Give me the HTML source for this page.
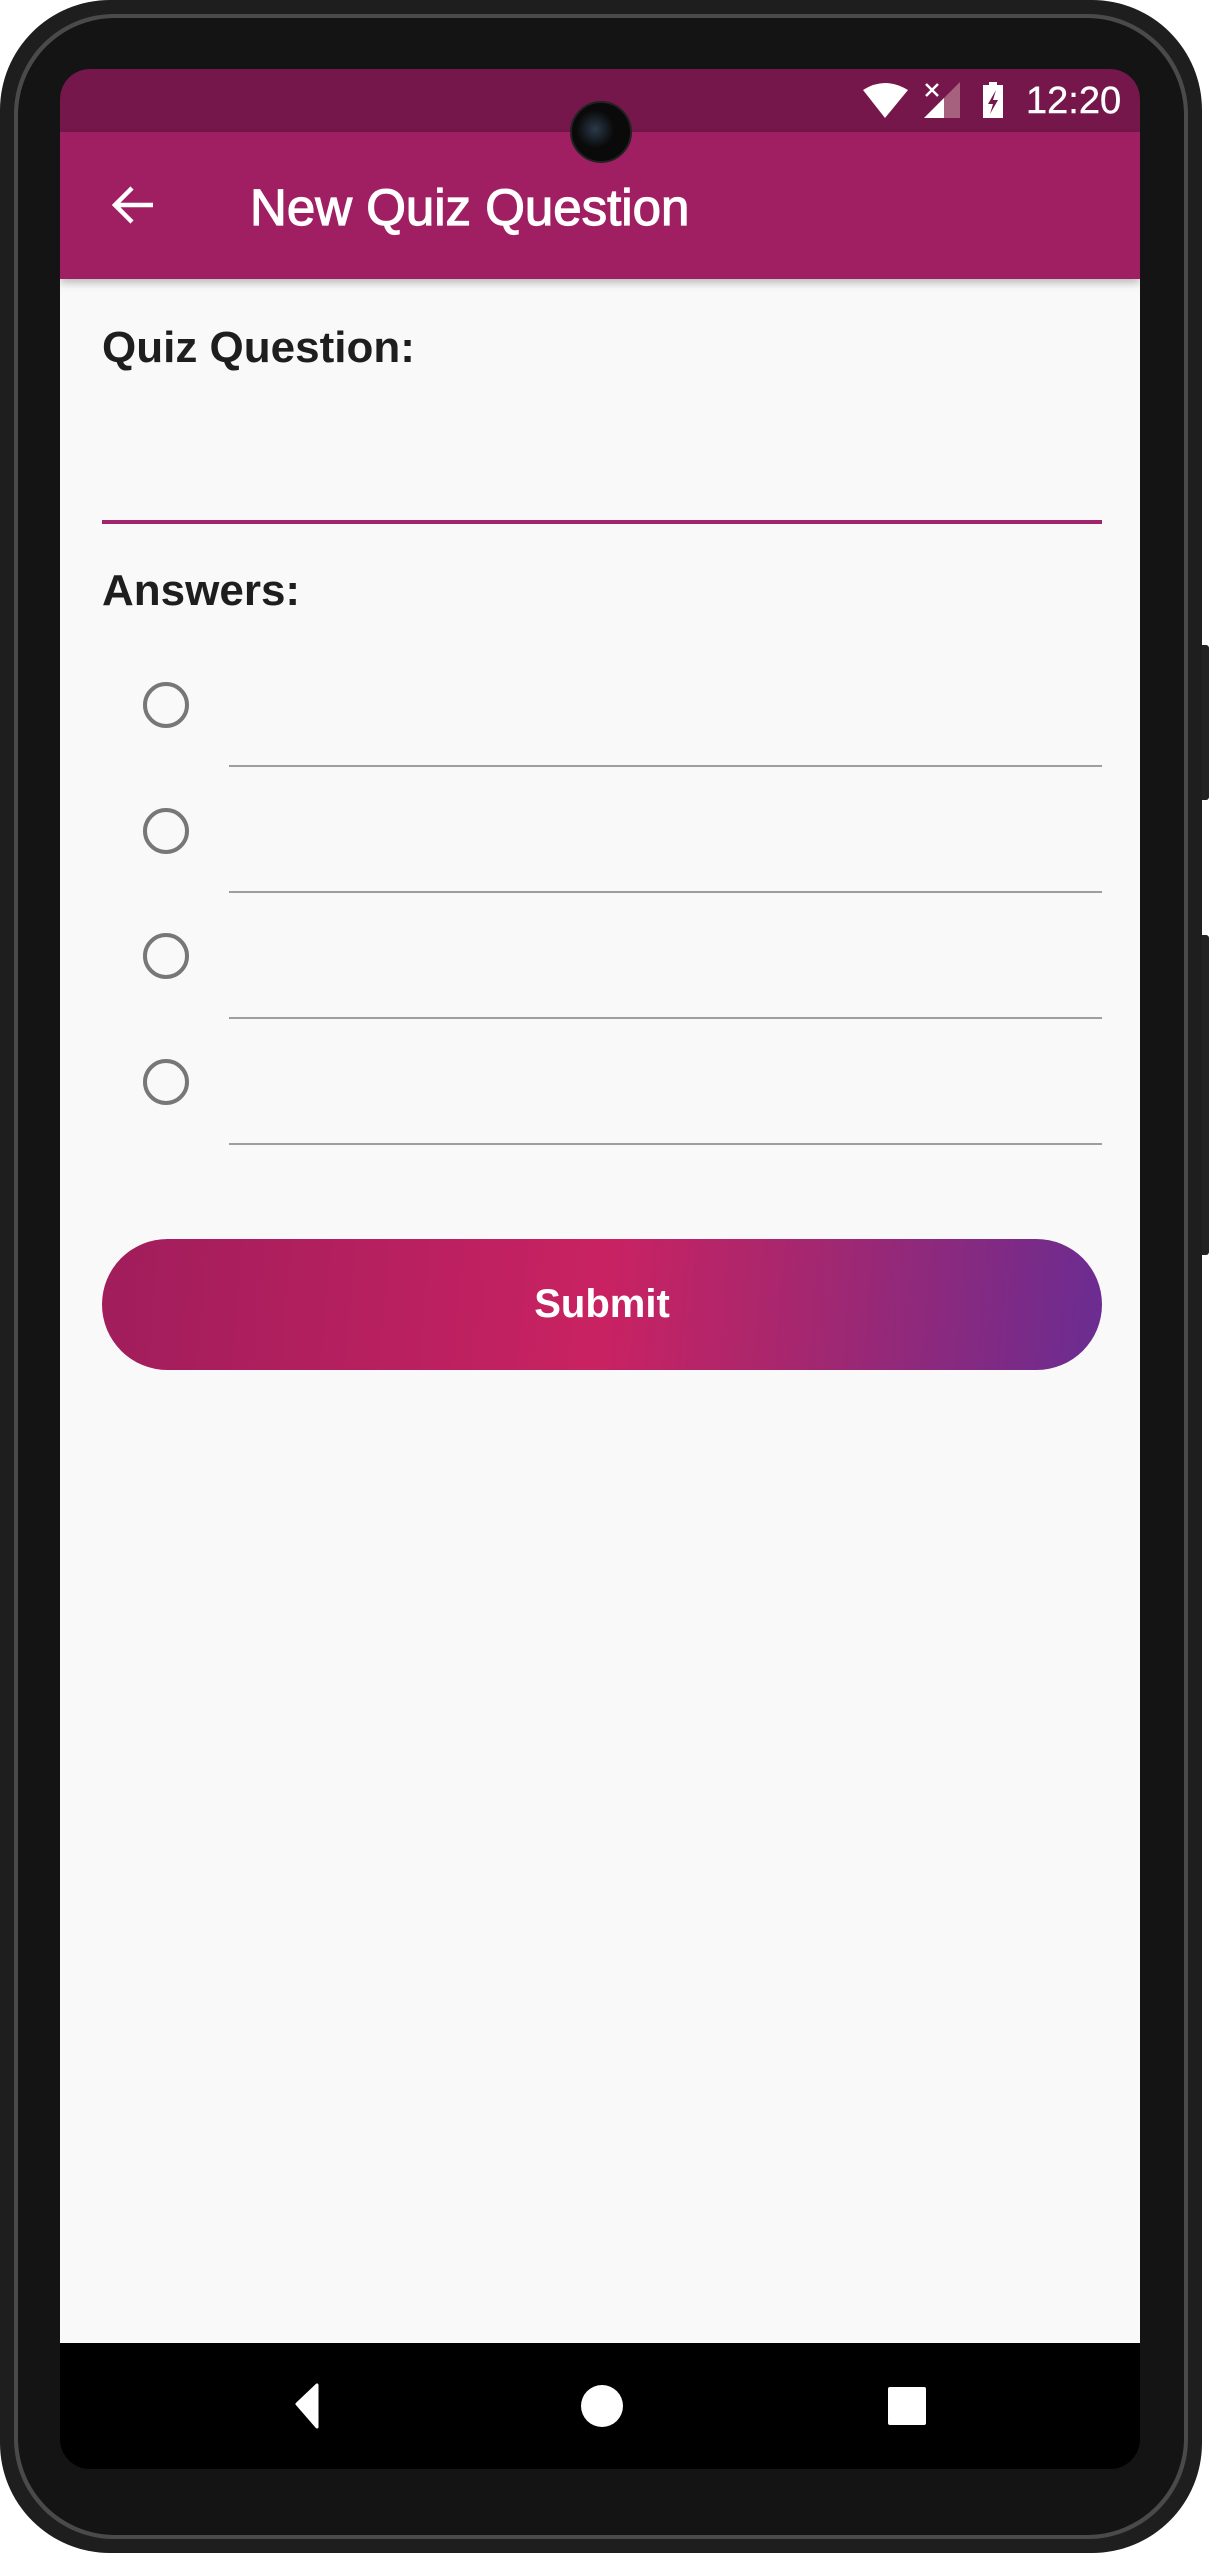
<!DOCTYPE html>
<html><head><style>
*{margin:0;padding:0;box-sizing:border-box}
body{width:1209px;height:2553px;background:#fff;position:relative;overflow:hidden;font-family:"Liberation Sans",sans-serif}
.abs{position:absolute}
</style></head><body>
<div class="abs" style="left:1199px;top:645px;width:10px;height:155px;background:#222;border-radius:3px"></div>
<div class="abs" style="left:1199px;top:935px;width:10px;height:320px;background:#222;border-radius:3px"></div>
<div class="abs" style="left:0;top:0;width:1202px;height:2553px;background:#1e1e1e;border-radius:110px"></div>
<div class="abs" style="left:14px;top:14px;width:1174px;height:2525px;background:#4a4a4a;border-radius:100px"></div>
<div class="abs" style="left:18px;top:18px;width:1166px;height:2517px;background:#141414;border-radius:97px"></div>
<div class="abs" style="left:60px;top:69px;width:1080px;height:2400px;background:#000;border-radius:30px;overflow:hidden">
  <div class="abs" style="left:0;top:0;width:1080px;height:63px;background:#75174a"></div>
  <div class="abs" style="left:0;top:63px;width:1080px;height:147px;background:#a01f62;box-shadow:0 4px 8px rgba(0,0,0,0.25);z-index:2"></div>
  <div class="abs" style="left:0;top:210px;width:1080px;height:2064px;background:#f9f9f9"></div>
</div>
<svg class="abs" style="left:860px;top:80px" width="160" height="42" viewBox="0 0 160 42">
  <path d="M3 10 Q25 -4 48 10 L25 38 Z" fill="#fff"/>
  <path d="M64 38 L100 2 L100 38 Z" fill="#a6617f"/>
  <path d="M64 38 L84 18 L84 38 Z" fill="#fff"/>
  <path d="M66 4 L78 16 M78 4 L66 16" stroke="#fff" stroke-width="2.5"/>
  <rect x="123" y="5" width="20" height="33" fill="#fff"/><rect x="129" y="2" width="8" height="4" fill="#fff"/>
  <path d="M136 10 L128 24 L133 24 L130 34 L138 20 L133 20 Z" fill="#75174a"/>
</svg>
<div class="abs" style="left:1026px;top:79px;color:#fff;font-size:38px;line-height:44px;-webkit-text-stroke:0.4px #fff">12:20</div>
<div class="abs" style="left:570px;top:101px;width:62px;height:62px;border-radius:50%;background:radial-gradient(circle at 40% 45%,#2a3a4a 0,#0a0a0a 40%);border:2px solid #222;z-index:5"></div>
<svg class="abs" style="left:108px;top:182px;z-index:3" width="50" height="50" viewBox="0 0 50 50">
  <path d="M45 23 H8 M24 6 L7 23 L24 40" stroke="#fff" stroke-width="4.5" fill="none"/>
</svg>
<div class="abs" style="left:250px;top:178px;color:#fff;font-size:51px;line-height:60px;z-index:3;-webkit-text-stroke:1.2px #fff">New Quiz Question</div>
<div class="abs" style="left:102px;top:320px;color:#1e1e1e;font-size:44px;font-weight:bold;line-height:56px">Quiz Question:</div>
<div class="abs" style="left:102px;top:520px;width:1000px;height:4px;background:#a3246a"></div>
<div class="abs" style="left:102px;top:563px;color:#1e1e1e;font-size:44px;font-weight:bold;line-height:56px">Answers:</div>
<div class="abs" style="left:143px;top:682px;width:46px;height:46px;border-radius:50%;border:4px solid #777"></div>
<div class="abs" style="left:143px;top:808px;width:46px;height:46px;border-radius:50%;border:4px solid #777"></div>
<div class="abs" style="left:143px;top:933px;width:46px;height:46px;border-radius:50%;border:4px solid #777"></div>
<div class="abs" style="left:143px;top:1059px;width:46px;height:46px;border-radius:50%;border:4px solid #777"></div>
<div class="abs" style="left:229px;top:765px;width:873px;height:2px;background:#9e9e9e"></div>
<div class="abs" style="left:229px;top:891px;width:873px;height:2px;background:#9e9e9e"></div>
<div class="abs" style="left:229px;top:1017px;width:873px;height:2px;background:#9e9e9e"></div>
<div class="abs" style="left:229px;top:1143px;width:873px;height:2px;background:#9e9e9e"></div>
<div class="abs" style="left:102px;top:1239px;width:1000px;height:131px;border-radius:66px;background:linear-gradient(95deg,#a01d5c 0%,#c92262 50%,#a5276f 70%,#6a2c91 100%);color:#fff;font-size:40px;font-weight:bold;text-align:center;line-height:131px">Submit</div>
<svg class="abs" style="left:270px;top:2380px" width="680" height="52" viewBox="0 0 680 52">
  <path d="M47 5 L47 47 L27 24 Z" fill="#fff" stroke="#fff" stroke-width="3" stroke-linejoin="round"/>
  <circle cx="332" cy="26" r="21" fill="#fff"/>
  <rect x="618" y="7" width="38" height="38" rx="2" fill="#fff"/>
</svg>
</body></html>
